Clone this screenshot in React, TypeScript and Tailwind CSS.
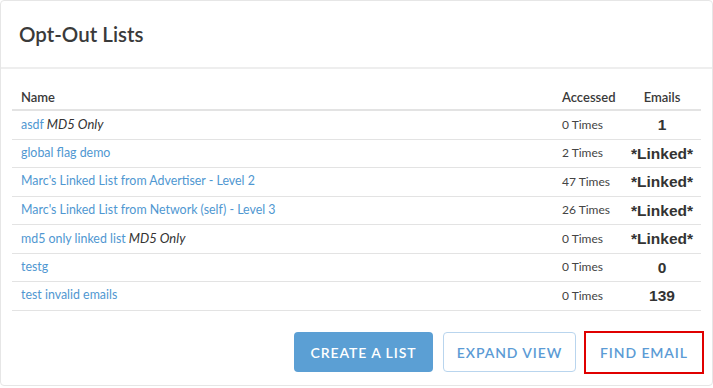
import React from "react";

interface OptOutRow {
    name: string;
    tag?: string;
    accessed: string;
    emails: string;
}

const rows: OptOutRow[] = [
    { name: "asdf", tag: "MD5 Only", accessed: "0 Times", emails: "1" },
    { name: "global flag demo", accessed: "2 Times", emails: "*Linked*" },
    { name: "Marc's Linked List from Advertiser - Level 2", accessed: "47 Times", emails: "*Linked*" },
    { name: "Marc's Linked List from Network (self) - Level 3", accessed: "26 Times", emails: "*Linked*" },
    { name: "md5 only linked list", tag: "MD5 Only", accessed: "0 Times", emails: "*Linked*" },
    { name: "testg", accessed: "0 Times", emails: "0" },
    { name: "test invalid emails", accessed: "0 Times", emails: "139" },
];

export default function App() {
    return (
        <div className="w-[713px] h-[388px] bg-white font-['Lato','Open_Sans',sans-serif] text-[#333]">
            <div className="h-[386px] border border-[#e6e6e6] rounded-sm flex flex-col">
                {/* Header */}
                <div className="h-[68px] flex items-center px-[18px] border-b-2 border-[#eeeeee]">
                    <h1 className="text-[20.5px] font-semibold text-[#3a3a3a] pt-[1px]">Opt-Out Lists</h1>
                </div>

                {/* Table */}
                <div className="px-[11px] pt-[16px]">
                    <div className="flex items-center h-[26px] border-b-2 border-[#e3e3e3] text-[13px] font-semibold text-[#3a3a3a]">
                        <div className="flex-1 pl-[9px] pt-[2px]">Name</div>
                        <div className="w-[61px] pt-[2px]">Accessed</div>
                        <div className="w-[78px] text-center pt-[2px]">Emails</div>
                    </div>
                    {rows.map((row) => (
                        <div
                            key={row.name}
                            className="flex items-center h-[28.5px] border-b border-[#e3e3e3] text-[12.4px]"
                        >
                            <div className="flex-1 pl-[9px]">
                                <span className="text-[#4f97d1]">{row.name}</span>
                                {row.tag && <i className="text-[13px] text-[#333]"> {row.tag}</i>}
                            </div>
                            <div className="w-[61px] text-[12px] text-[#444]">{row.accessed}</div>
                            <div className="w-[78px] text-center font-['Liberation_Sans',Arial,sans-serif] font-bold text-[15.5px] text-[#333]">
                                {row.emails}
                            </div>
                        </div>
                    ))}
                </div>

                {/* Actions */}
                <div className="flex justify-end items-center pr-[8px] pt-[20px] text-[14px] font-semibold tracking-[0.9px]">
                    <button className="h-[40px] w-[139px] rounded bg-[#5b9fd4] text-white">CREATE A LIST</button>
                    <button className="ml-[10px] h-[40px] w-[133px] rounded border border-[#b9d5ee] bg-white text-[#5b9bd5]">
                        EXPAND VIEW
                    </button>
                    <button className="ml-[8px] h-[43px] w-[120px] border-2 border-[#e00000] bg-white text-[#5b9bd5]">
                        FIND EMAIL
                    </button>
                </div>
            </div>
        </div>
    );
}
